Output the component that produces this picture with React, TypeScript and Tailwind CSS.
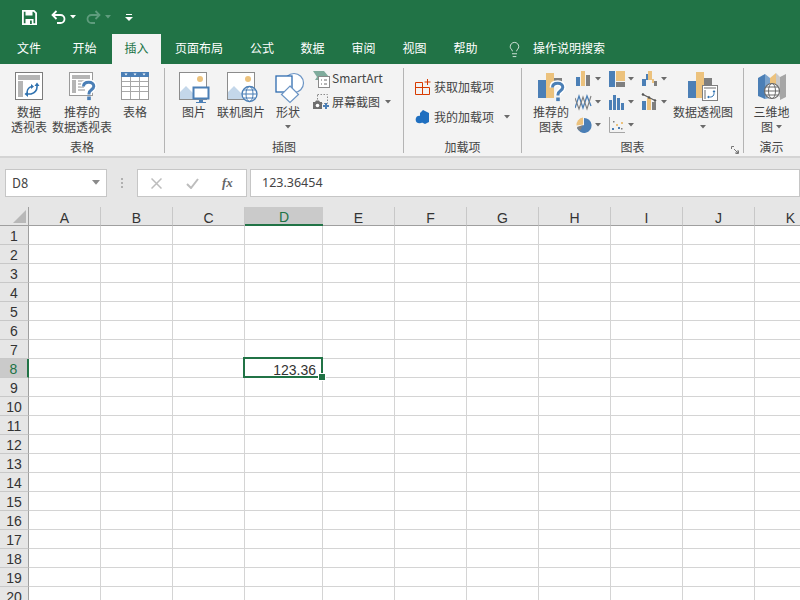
import { Lightbulb } from "lucide-react";
import type { ReactNode } from "react";

const BLUE = "#4b7fb6";
const TAN = "#ecc27d";
const GRAY = "#7f7f7f";

// ─── Small parts ──────────────────────────────────────────────

function Caret({ color = "#6a6a6a", width = 6 }: { color?: string; width?: number }) {
  return (
    <svg width={width} height={(width * 2) / 3} viewBox="0 0 6 4" className="shrink-0">
      <path d="M0 0h6L3 3.500z" fill={color} />
    </svg>
  );
}

function Ico({ w, h, children }: { w: number; h: number; children: ReactNode }) {
  return (
    <svg width={w} height={h} viewBox={`0 0 ${w} ${h}`} fill="none" className="shrink-0">
      {children}
    </svg>
  );
}

function Question({ x, y }: { x: number; y: number }) {
  return (
    <g transform={`translate(${x} ${y})`}>
      <path d="M1.500 5.500C1.500 2.500 3.800 1.300 6.800 1.300c3 0 5 1.600 5 4 0 3.400-4.800 3.600-4.800 7.200v1" stroke="#fff" strokeWidth="6" />
      <path d="M1.500 5.500C1.500 2.500 3.800 1.300 6.800 1.300c3 0 5 1.600 5 4 0 3.400-4.800 3.600-4.800 7.200v1" stroke={BLUE} strokeWidth="3" />
      <rect x="5.200" y="15.500" width="3.600" height="3.600" fill={BLUE} />
    </g>
  );
}

// ─── Big icons ────────────────────────────────────────────────

function PivotTableIcon() {
  return (
    <Ico w={29} h={29}>
      <rect x=".5" y=".5" width="27" height="27" fill="#fff" stroke="#7c7c7c" />
      <rect x="3" y="3" width="22" height="5" fill="#b5b5b5" />
      <rect x="3" y="9" width="5" height="16" fill="#b5b5b5" />
      <path d="M22 13v2c0 4-3 6-6 7h-4" stroke="#2f72b0" strokeWidth="1.600" />
      <path d="M19.500 14l2.500-3.500 2.500 3.500zM13 19l-3.500 3 3.500 3z" fill="#2f72b0" />
      <path d="M12 20c.5-3 2-5 5-5.500" stroke="#2f72b0" strokeWidth="1.400" />
      <path d="M16 12l3 2.500-3 2.500z" fill="#2f72b0" />
    </Ico>
  );
}

function RecommendedPivotIcon() {
  return (
    <Ico w={29} h={33}>
      <rect x=".5" y=".5" width="23" height="23" fill="#fff" stroke="#9a9a9a" />
      <rect x="3" y="3" width="18" height="4" fill="#b5b5b5" />
      <rect x="3" y="8" width="4" height="13" fill="#b5b5b5" />
      <path d="M9 9h8M9 12h10M9 15h6M9 18h7" stroke="#b5b5b5" strokeWidth="1.500" />
      <Question x={13} y={9} />
    </Ico>
  );
}

function TableIcon() {
  return (
    <Ico w={29} h={29}>
      <rect x=".5" y=".5" width="27" height="27" fill="#fff" stroke="#9a9a9a" />
      <rect x="0" y="0" width="28" height="5" fill={BLUE} />
      <path d="M1 9.500h26M1 14.500h26M1 19.500h26M9.500 5v22M18.500 5v22" stroke="#a8a8a8" />
      <path d="M3.500 1.500h3L5 3.500zM12.500 1.500h3L14 3.500zM21.500 1.500h3L23 3.500z" fill="#fff" />
    </Ico>
  );
}

function PictureBase() {
  return (
    <>
      <rect x=".5" y=".5" width="27" height="27" fill="#fff" stroke="#8c8c8c" />
      <circle cx="21" cy="7" r="3" fill={TAN} />
      <path d="M1 27v-7l6-6 7 7 3-2 8 8z" fill="#c4d7ea" />
    </>
  );
}

function PictureIcon() {
  return (
    <Ico w={31} h={33}>
      <PictureBase />
      <rect x="14.500" y="15.500" width="15" height="11" fill="#fff" stroke={BLUE} strokeWidth="2" />
      <path d="M20 28h4v2h3v1H17v-1h3z" fill={BLUE} />
    </Ico>
  );
}

function OnlinePictureIcon() {
  return (
    <Ico w={32} h={33}>
      <PictureBase />
      <circle cx="22.500" cy="22" r="7.500" fill="#fff" stroke={BLUE} strokeWidth="1.300" />
      <ellipse cx="22.500" cy="22" rx="3.500" ry="7.500" stroke={BLUE} />
      <path d="M15 22h15M16.500 18h12M16.500 26h12" stroke={BLUE} />
    </Ico>
  );
}

function ShapesIcon() {
  return (
    <Ico w={30} h={33}>
      <circle cx="19" cy="11" r="9.500" fill="#fff" stroke="#6b94c4" strokeWidth="1.200" />
      <rect x="1" y="4" width="16" height="16" fill="#fff" stroke="#2f6cb0" strokeWidth="1.300" />
      <path d="M15 14l8.500 8.500L15 30.500 6.500 22.500z" fill="#fff" stroke="#6b94c4" strokeWidth="1.200" />
    </Ico>
  );
}

function RecommendedChartIcon() {
  return (
    <Ico w={29} h={33}>
      <rect x="0" y="8" width="8" height="18" fill={BLUE} />
      <rect x="8" y="1" width="8" height="25" fill={TAN} />
      <rect x="16" y="6" width="8" height="7" fill={GRAY} />
      <Question x={13} y={10} />
    </Ico>
  );
}

function PivotChartIcon() {
  return (
    <Ico w={31} h={33}>
      <rect x="0" y="9" width="8" height="17" fill={BLUE} />
      <rect x="8" y="0" width="8" height="26" fill={TAN} />
      <rect x="16" y="6" width="8" height="10" fill={GRAY} />
      <rect x="14.500" y="13.500" width="15" height="15" fill="#fff" stroke={GRAY} />
      <rect x="16" y="15" width="12" height="2" fill="#b5b5b5" />
      <rect x="16" y="18" width="2" height="9" fill="#b5b5b5" />
      <path d="M26 19v2.500c0 2-1.500 3.500-3.500 3.500h-2" stroke="#2f72b0" />
      <path d="M24.500 20l1.500-2 1.500 2zM21 23.500L19 25l2 1.500z" fill="#2f72b0" />
    </Ico>
  );
}

function MapIcon() {
  return (
    <Ico w={30} h={30}>
      <path d="M1 6l7-4v25l-7-3z" fill={BLUE} />
      <path d="M8 2l5 4v20l-5 1z" fill="#7ba3cc" />
      <path d="M13 6l6-5v22l-6 3z" fill={TAN} />
      <path d="M19 1l4 4v20l-4-2z" fill="#c9c9c9" />
      <path d="M23 5l6-3v23l-6 3z" fill="#a6a6a6" />
      <circle cx="15" cy="19" r="7.500" fill="#fff" stroke="#6b6b6b" strokeWidth="1.200" />
      <ellipse cx="15" cy="19" rx="3.500" ry="7.500" stroke="#6b6b6b" />
      <path d="M7.500 19h15M9 15h12M9 23h12" stroke="#6b6b6b" />
    </Ico>
  );
}

// ─── Small chart icons ────────────────────────────────────────

const smallCharts: ReactNode[][] = [
  [
    <>
      <rect x="1" y="7" width="4" height="9" fill={BLUE} />
      <rect x="6" y="1" width="4" height="15" fill={TAN} />
      <rect x="11" y="5" width="4" height="11" fill={GRAY} />
    </>,
    <>
      <path d="M0 15L4 3l4 12 4-12 4 10" stroke={BLUE} strokeWidth="1.300" />
      <path d="M0 5l4 11 4-12 4 12 4-13" stroke={GRAY} strokeWidth="1.100" />
    </>,
    <>
      <path d="M9 2a7.500 7.500 0 1 1-7 10l7-3z" fill={BLUE} />
      <path d="M1.500 9.500A7.500 7.500 0 0 1 8 1.500v7z" fill={TAN} />
      <path d="M2 11l6-2-3 6c-1.500-.8-2.500-2.500-3-4z" fill={GRAY} />
    </>,
  ],
  [
    <>
      <rect x="1" y="1" width="6" height="16" fill={BLUE} />
      <rect x="8" y="1" width="9" height="10" fill={TAN} />
      <rect x="8" y="12" width="9" height="5" fill={GRAY} />
    </>,
    <>
      <rect x="1" y="7" width="3" height="10" fill={BLUE} />
      <rect x="5" y="2" width="3" height="15" fill={BLUE} />
      <rect x="9" y="5" width="3" height="12" fill={BLUE} />
      <rect x="13" y="10" width="3" height="7" fill={BLUE} />
    </>,
    <>
      <path d="M1.500 1v15.500H17" stroke="#a6a6a6" />
      <path d="M4 12h2v2H4zM10 11h2v2h-2z" fill={BLUE} />
      <path d="M8 8h2v2H8zM13 6h2v2h-2z" fill={TAN} />
      <path d="M5 5h1.500v1.500H5zM13 12h1.500v1.500H13z" fill={GRAY} />
    </>,
  ],
  [
    <>
      <rect x="1" y="9" width="4" height="7" fill={BLUE} />
      <rect x="5" y="4" width="2" height="6" fill={BLUE} />
      <rect x="7" y="1" width="4" height="9" fill={TAN} />
      <rect x="11" y="9" width="2" height="4" fill={TAN} />
      <rect x="13" y="11" width="3" height="5" fill={GRAY} />
    </>,
    <>
      <rect x="1" y="8" width="4" height="9" fill={BLUE} />
      <rect x="6" y="5" width="4" height="12" fill={TAN} />
      <rect x="11" y="9" width="4" height="8" fill={GRAY} />
      <path d="M1 1l6 3 8 4" stroke="#555" strokeWidth="1.200" />
      <circle cx="2" cy="1.500" r="1.200" fill="#555" />
      <circle cx="8" cy="4.500" r="1.200" fill="#555" />
      <circle cx="14" cy="7.500" r="1.200" fill="#555" />
    </>,
  ],
];

// ─── Ribbon items ─────────────────────────────────────────────

function BigButton({
  icon,
  lines,
  className,
  iconClass = "",
  caret,
}: {
  icon: ReactNode;
  lines: string[];
  className: string;
  iconClass?: string;
  caret?: boolean;
}) {
  return (
    <div className={`flex flex-col items-center pt-2 ${className}`}>
      <div className={`flex h-8 w-full items-start justify-center ${iconClass}`}>{icon}</div>
      {lines.map((line) => (
        <span key={line} className="h-[15px] whitespace-nowrap leading-[15px]">
          {line}
        </span>
      ))}
      {caret && (
        <span className="flex h-[15px] items-center">
          <Caret />
        </span>
      )}
    </div>
  );
}

function Group({
  label,
  className,
  children,
}: {
  label: string;
  className: string;
  children: ReactNode;
}) {
  return (
    <div className={`relative flex shrink-0 flex-col ${className}`}>
      <div className="flex h-[75px]">{children}</div>
      <div className="h-[15px] text-center leading-[15px]">{label}</div>
    </div>
  );
}

function Separator() {
  return <div className="mt-1 h-[85px] w-px shrink-0 bg-[#b4b4b4]" />;
}

// ─── Ribbon ───────────────────────────────────────────────────

function Ribbon() {
  return (
    <div className="flex h-[91px] overflow-hidden bg-[#f3f3f3] text-xs text-[#444]">
      <Group label="表格" className="w-[164px]">
        <BigButton icon={<PivotTableIcon />} lines={["数据", "透视表"]} className="ml-[6px] w-[46px]" />
        <BigButton icon={<RecommendedPivotIcon />} lines={["推荐的", "数据透视表"]} iconClass="pl-[3px]" className="w-[60px]" />
        <BigButton icon={<TableIcon />} lines={["表格"]} iconClass="pl-px" className="ml-[5px] w-9" />
      </Group>
      <Separator />
      <Group label="插图" className="w-[238px]">
        <BigButton icon={<PictureIcon />} lines={["图片"]} iconClass="pl-px" className="ml-[15px] w-7" />
        <BigButton icon={<OnlinePictureIcon />} lines={["联机图片"]} iconClass="pl-[3px]" className="ml-[9px] w-12" />
        <BigButton icon={<ShapesIcon />} lines={["形状"]} iconClass="pl-[3px]" caret className="ml-[9px] w-7" />
        <div className="ml-[11px] flex flex-col pt-[3px]">
          <div className="flex h-[23px] items-center gap-[2px]">
            <Ico w={17} h={18}>
              <path d="M0 1h11l5 6H7L5 10H2l2-3z" fill="#7fab9c" />
              <rect x="5.500" y="6.500" width="11" height="11" fill="#fff" stroke="#8a8a8a" />
              <path d="M8 10h1M11 10h3M8 14h1M11 14h3" stroke="#6a6a6a" />
            </Ico>
            <span className="-mt-px">SmartArt</span>
          </div>
          <div className="flex h-[23px] items-center gap-[2px]">
            <Ico w={17} h={16}>
              <rect x="4.500" y=".5" width="10" height="9" stroke="#8a8a8a" strokeDasharray="1.500 1.500" />
              <path d="M0 8h2l1-1.500h3L7 8h2v7H0z" fill="#6e6e6e" />
              <circle cx="4.500" cy="11.500" r="1.800" fill="#fff" />
              <path d="M13 9v6M10 12h6" stroke={BLUE} strokeWidth="2" />
            </Ico>
            <span>屏幕截图</span>
            <span className="ml-[3px]">
              <Caret />
            </span>
          </div>
        </div>
      </Group>
      <Separator />
      <Group label="加载项" className="w-[117px]">
        <div className="ml-[11px] flex flex-col pt-2">
          <div className="flex h-[30px] items-center gap-[3px]">
            <Ico w={16} h={16}>
              <path d="M.5 3.500h7v12h-7zM7.500 8.500h7v7h-7zM.5 8.500h7" stroke="#d83b01" />
              <path d="M12.500 0v6M9.500 3h6" stroke="#d83b01" />
            </Ico>
            <span className="-mt-px">获取加载项</span>
          </div>
          <div className="flex h-[30px] items-center gap-[3px]">
            <Ico w={16} h={16}>
              <path d="M8 1l6 3v9l-4 2-4-2V9L5 7V4z" fill="#1f6fc0" />
              <circle cx="4.500" cy="10.500" r="3.800" fill="#1f6fc0" />
            </Ico>
            <span>我的加载项</span>
            <span className="ml-[7px]">
              <Caret />
            </span>
          </div>
        </div>
      </Group>
      <Separator />
      <Group label="图表" className="w-[221px]">
        <BigButton icon={<RecommendedChartIcon />} lines={["推荐的", "图表"]} iconClass="pl-[3px]" className="ml-[11px] w-9" />
        <div className="ml-[6px] flex pt-[3px]">
          {smallCharts.map((column, i) => (
            <div key={i} className="flex w-[33px] flex-col">
              {column.map((chart, j) => (
                <div key={j} className="flex h-[23px] items-center gap-[3px]">
                  <Ico w={17} h={18}>
                    {chart}
                  </Ico>
                  <Caret />
                </div>
              ))}
            </div>
          ))}
        </div>
        <BigButton icon={<PivotChartIcon />} lines={["数据透视图"]} iconClass="pl-px" caret className="-ml-px w-[60px]" />
        <svg width="8" height="8" viewBox="0 0 8 8" fill="none" className="absolute bottom-[1px] right-[4px]">
          <path d="M.5 3V.5H3M7.500 5v2.500H5" stroke="#777" />
          <path d="M3 3l4 4M7 4v3H4" stroke="#777" />
        </svg>
      </Group>
      <Separator />
      <Group label="演示" className="w-[55px]">
        <div className="flex w-full flex-col items-center pt-2">
          <div className="h-8">
            <MapIcon />
          </div>
          <span className="h-[15px] leading-[15px]">三维地</span>
          <span className="flex h-[15px] items-center gap-[3px] leading-[15px]">
            图<Caret />
          </span>
        </div>
      </Group>
    </div>
  );
}

// ─── Title bar & tabs ─────────────────────────────────────────

const tabs = [
  { label: "文件", w: "w-[56px]" },
  { label: "开始", w: "w-[55px]" },
  { label: "插入", w: "w-[49px]", active: true },
  { label: "页面布局", w: "w-[76px]" },
  { label: "公式", w: "w-[50px]" },
  { label: "数据", w: "w-[51px]" },
  { label: "审阅", w: "w-[51px]" },
  { label: "视图", w: "w-[51px]" },
  { label: "帮助", w: "w-[51px]" },
];

function TitleBar() {
  return (
    <div className="flex h-[34px] items-center bg-[#217346] pl-[22px]">
      <svg width="15" height="15" viewBox="0 0 15 15" fill="none">
        <path d="M.9.9h11l2.200 2.200v11H.9z" stroke="#fff" strokeWidth="1.800" />
        <rect x="3.500" y="1" width="7" height="4.500" fill="#fff" />
        <rect x="3.500" y="9" width="8" height="5" fill="#fff" />
        <rect x="8" y="10.500" width="1.800" height="3.500" fill="#217346" />
      </svg>
      <svg width="15" height="14" viewBox="0 0 15 14" fill="none" className="ml-[14px]">
        <path d="M2 5h7.500a4 4 0 0 1 0 8H6" stroke="#fff" strokeWidth="1.800" />
        <path d="M5.500 1L1.500 5l4 4" stroke="#fff" strokeWidth="1.800" />
      </svg>
      <span className="ml-[4px]">
        <Caret color="#fff" />
      </span>
      <svg width="15" height="14" viewBox="0 0 15 14" fill="none" className="ml-[10px]">
        <path d="M13 5H5.500a4 4 0 0 0 0 8H9" stroke="#5f9c7d" strokeWidth="1.800" />
        <path d="M9.500 1l4 4-4 4" stroke="#5f9c7d" strokeWidth="1.800" />
      </svg>
      <span className="ml-[4px]">
        <Caret color="#5f9c7d" />
      </span>
      <svg width="8" height="7" viewBox="0 0 8 7" className="ml-[14px]">
        <rect x="1" y="0" width="6" height="1" fill="#fff" />
        <path d="M0 3h8L4 7z" fill="#fff" />
      </svg>
    </div>
  );
}

function Tabs() {
  return (
    <div className="flex h-[30px] items-stretch bg-[#217346] pl-px text-xs text-white">
      {tabs.map((tab) => (
        <div
          key={tab.label}
          className={`flex items-center justify-center pb-[2px] ${tab.w} ${
            tab.active ? "bg-[#f3f3f3] text-[#217346]" : ""
          }`}
        >
          {tab.label}
        </div>
      ))}
      <div className="ml-[15px] flex items-center">
        <Lightbulb size={17} strokeWidth={1.1} color="#fff" />
      </div>
      <div className="ml-[10px] flex items-center pb-[2px]">操作说明搜索</div>
    </div>
  );
}

// ─── Formula bar ──────────────────────────────────────────────

function FormulaBar() {
  return (
    <div className="flex h-[49px] items-start bg-[#e6e6e6] pt-[11px] text-xs text-[#444]">
      <div className="ml-[5px] flex h-7 w-[102px] items-center justify-between border border-[#c6c6c6] bg-white pl-[6px] pr-[6px]">
        <span className="text-[13px]">D8</span>
        <Caret color="#8a8a8a" width={8} />
      </div>
      <div className="ml-[14px] mt-[9px] flex h-[10px] w-[3px] flex-col justify-between">
        <i className="block h-[2px] w-[2px] bg-[#b0b0b0]" />
        <i className="block h-[2px] w-[2px] bg-[#b0b0b0]" />
        <i className="block h-[2px] w-[2px] bg-[#b0b0b0]" />
      </div>
      <div className="ml-[13px] flex h-7 w-[110px] items-center border border-[#c6c6c6] bg-white">
        <svg width="11" height="11" viewBox="0 0 11 11" className="ml-[13px]">
          <path d="M.5.5l10 10M10.500.5l-10 10" stroke="#bdbdbd" strokeWidth="1.500" />
        </svg>
        <svg width="13" height="11" viewBox="0 0 13 11" fill="none" className="ml-[24px]">
          <path d="M1 6l4 4 7-9" stroke="#bdbdbd" strokeWidth="2" />
        </svg>
        <span className="ml-[23px] font-['Liberation_Serif',serif] text-[13px] font-bold italic text-[#666]">
          fx
        </span>
      </div>
      <div className="ml-[3px] flex h-7 flex-1 items-center border border-[#c6c6c6] bg-white pl-[11px] font-['Noto_Sans',sans-serif] text-[12.500px]">
        123.36454
      </div>
    </div>
  );
}

// ─── Sheet ────────────────────────────────────────────────────

const columns = ["A", "B", "C", "D", "E", "F", "G", "H", "I", "J", "K"];
const rows = Array.from({ length: 20 }, (_, i) => i + 1);

function Sheet() {
  return (
    <div className="grid grid-cols-[29px_72px_72px_72px_78px_72px_72px_72px_72px_72px_72px_72px] grid-rows-[19px] auto-rows-[19px] font-['Liberation_Sans',sans-serif] text-sm text-[#333]">
      <div className="flex items-end justify-end border-b border-r border-[#9f9f9f] bg-[#e6e6e6] p-[2px]">
        <svg width="13" height="13" viewBox="0 0 13 13">
          <path d="M13 0v13H0z" fill="#b8b8b8" />
        </svg>
      </div>
      {columns.map((c) =>
        c === "D" ? (
          <div key={c} className="flex items-center justify-center border-b-2 border-[#217346] bg-[#cacaca] pt-[3px] text-[#217346]">
            {c}
          </div>
        ) : (
          <div key={c} className="flex items-center justify-center border-b border-r border-b-[#9f9f9f] border-r-[#c8c8c8] bg-[#e6e6e6] pt-[3px]">
            {c}
          </div>
        ),
      )}
      {rows.map((r) => (
        <div key={r} className="contents">
          {r === 8 ? (
            <div className="flex items-center justify-center border-b border-r-2 border-b-[#c8c8c8] border-r-[#217346] bg-[#cacaca] pt-[2px] text-[#217346]">
              {r}
            </div>
          ) : (
            <div className="flex items-center justify-center border-b border-r border-b-[#c8c8c8] border-r-[#9f9f9f] bg-[#e6e6e6] pt-[2px]">
              {r}
            </div>
          )}
          {columns.map((c) =>
            r === 8 && c === "D" ? (
              <div key={c} className="relative flex items-center justify-end border-b border-r border-[#d4d4d4] pr-[6px] pt-[3px]">
                123.36
                <div className="absolute -left-[2px] -right-px -top-[2px] -bottom-px border-2 border-[#217346]" />
                <div className="absolute -bottom-[3px] -right-[3px] h-[6px] w-[6px] bg-[#217346] outline outline-1 outline-white" />
              </div>
            ) : (
              <div key={c} className="border-b border-r border-[#d4d4d4]" />
            ),
          )}
        </div>
      ))}
    </div>
  );
}

export default function App() {
  return (
    <div className="h-[600px] w-[800px] overflow-hidden bg-white font-['Noto_Sans_CJK_SC','Noto_Sans',sans-serif]">
      <TitleBar />
      <Tabs />
      <Ribbon />
      <div className="h-[3px] border-b-2 border-[#d4d4d4] bg-[#f3f3f3]" />
      <FormulaBar />
      <Sheet />
    </div>
  );
}
